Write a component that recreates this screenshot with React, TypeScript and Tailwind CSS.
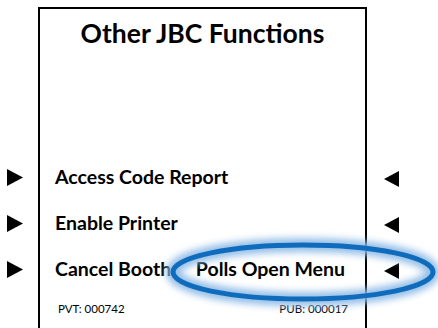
import React from "react";

const RightTri = () => (
  <svg width="16" height="17" viewBox="0 0 16 17" className="block">
    <polygon points="0,0 16,8.5 0,17" fill="#000" />
  </svg>
);
const LeftTri = () => (
  <svg width="15" height="16" viewBox="0 0 15 16" className="block">
    <polygon points="15,0 0,8 15,16" fill="#000" />
  </svg>
);

const font = { fontFamily: "Lato, 'Open Sans', sans-serif" };

function OptionRow({ children, left = true, right = true }: { children: React.ReactNode; left?: boolean; right?: boolean }) {
  return (
    <div className="flex h-[46px]">
      <div className="w-[38px] flex items-center pl-[7px]">{left && <RightTri />}</div>
      <div className="w-[329px] border-x-2 border-black flex items-center pl-[15px] pr-[20px]">{children}</div>
      <div className="flex-1 flex items-center pl-[17px] pt-[3px]">{right && <LeftTri />}</div>
    </div>
  );
}

export default function App() {
  return (
    <div className="relative w-[438px] h-[328px] bg-white overflow-hidden text-black" style={font}>
      <div className="pt-[7px] flex flex-col">
        <div className="flex h-[147px]">
          <div className="w-[38px]" />
          <div className="w-[329px] border-x-2 border-t-2 border-black flex justify-center pt-[9px]">
            <div className="text-[26.5px] font-bold leading-[30px]">Other JBC Functions</div>
          </div>
          <div className="flex-1" />
        </div>
        <OptionRow>
          <span className="text-[19.5px] font-bold leading-none">Access Code Report</span>
        </OptionRow>
        <OptionRow>
          <span className="text-[19.5px] font-bold leading-none">Enable Printer</span>
        </OptionRow>
        <OptionRow>
          <div className="flex w-full justify-between">
            <span className="text-[19.5px] font-bold leading-none">Cancel Booth</span>
            <span className="text-[19.5px] font-bold leading-none">Polls Open Menu</span>
          </div>
        </OptionRow>
        <div className="flex h-[40px]">
          <div className="w-[38px]" />
          <div className="w-[329px] border-x-2 border-black flex justify-between items-start pt-[11px] pl-[18px] pr-[17px] text-[11.5px] leading-none">
            <span>PVT: 000742</span>
            <span>PUB: 000017</span>
          </div>
          <div className="flex-1" />
        </div>
      </div>
      <svg className="absolute inset-0 pointer-events-none" width="438" height="328" viewBox="0 0 438 328">
        <defs>
          <filter id="glow" x="-20%" y="-50%" width="140%" height="200%">
            <feGaussianBlur stdDeviation="3.5" />
          </filter>
        </defs>
        <ellipse cx="303" cy="272" rx="130" ry="27" fill="none" stroke="#8fbbe6" strokeWidth="14" filter="url(#glow)" opacity="0.95" />
        <ellipse cx="303" cy="272" rx="130" ry="27" fill="none" stroke="#0f6cbd" strokeWidth="5" />
      </svg>
    </div>
  );
}
